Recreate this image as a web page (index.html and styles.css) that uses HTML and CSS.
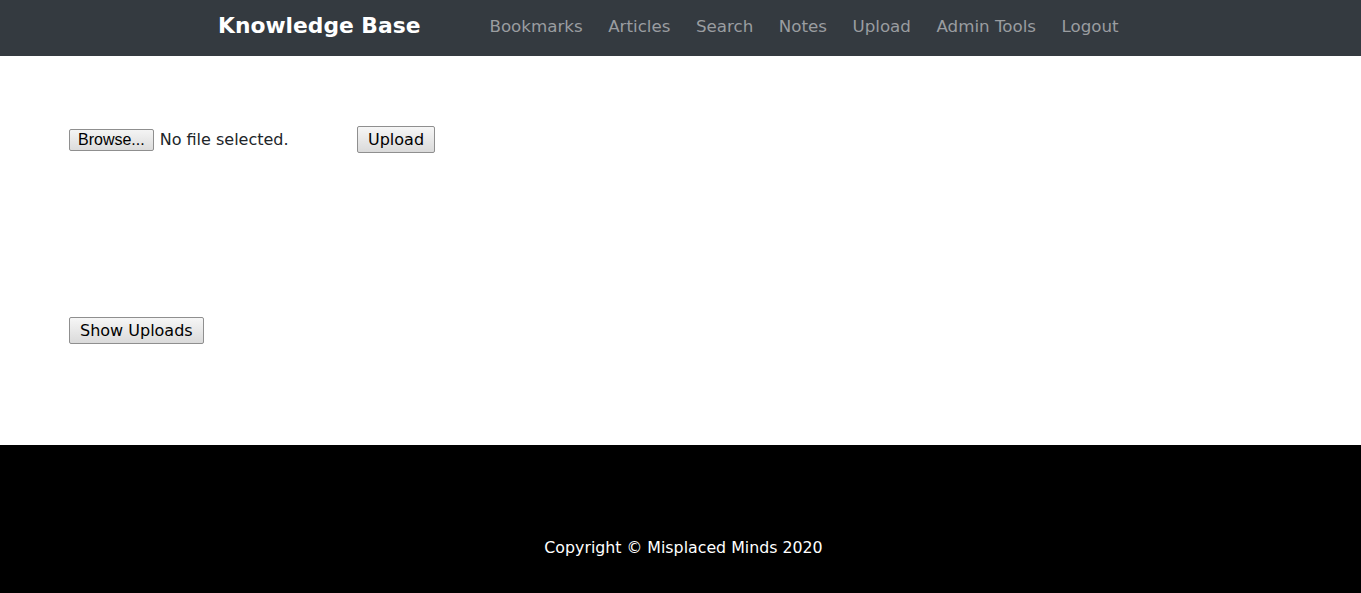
FILE: index.html
```html
<!DOCTYPE html>
<html>
<head>
<meta charset="utf-8">
<title>Knowledge Base</title>
<link rel="stylesheet" href="styles.css">
</head>
<body>
<nav class="navbar">
  <div class="nav-inner">
    <a class="brand" href="#">Knowledge Base</a>
    <ul class="nav-links">
      <li><a href="#">Bookmarks</a></li>
      <li><a href="#">Articles</a></li>
      <li><a href="#">Search</a></li>
      <li><a href="#">Notes</a></li>
      <li><a href="#">Upload</a></li>
      <li><a href="#">Admin Tools</a></li>
      <li><a href="#">Logout</a></li>
    </ul>
  </div>
</nav>
<main class="content">
  <form class="upload-form">
    <div class="file-input">
      <button type="button" class="browse">Browse...</button>
      <span class="file-status">No file selected.</span>
    </div>
    <button type="button" class="btn">Upload</button>
  </form>
  <div class="show-row">
    <button type="button" class="btn">Show Uploads</button>
  </div>
</main>
<footer class="footer">
  <p>Copyright © Misplaced Minds 2020</p>
</footer>
</body>
</html>
```
FILE: styles.css
```css
* { box-sizing: border-box; }
html, body { margin: 0; padding: 0; }
body {
  font-family: "DejaVu Sans", sans-serif;
  color: #212529;
  background: #fff;
  width: 1361px;
}
.navbar {
  background: #343a40;
  height: 56px;
  display: flex;
  align-items: center;
  padding-bottom: 5px;
}
.nav-inner {
  display: flex;
  align-items: center;
  padding-left: 218px;
}
.brand {
  color: #fff;
  font-weight: bold;
  font-size: 21.8px;
  text-decoration: none;
  margin-right: 69px;
}
.nav-links {
  list-style: none;
  display: flex;
  gap: 25.5px;
  margin: 0;
  padding: 0;
}
.nav-links a {
  color: #9a9da0;
  text-decoration: none;
  font-size: 16.7px;
}
.content {
  height: 389px;
  padding: 70px 0 0 69px;
}
.upload-form {
  display: flex;
  align-items: center;
  height: 27px;
}
.file-input {
  display: flex;
  align-items: center;
  width: 288px;
}
.browse {
  font-family: "Liberation Sans", Arial, sans-serif;
  font-size: 16px;
  height: 22px;
  padding: 0 8px;
  border: 1px solid #8f8f8f;
  border-radius: 2px;
  background: linear-gradient(#f4f4f4, #dcdcdc);
  color: #000;
  margin-right: 6px;
}
.file-status {
  font-size: 16px;
  color: #212529;
}
.btn {
  font-family: "DejaVu Sans", sans-serif;
  font-size: 16px;
  height: 27px;
  padding: 0 10px;
  border: 1px solid #8f8f8f;
  border-radius: 2px;
  background: linear-gradient(#f6f6f6, #dadada);
  color: #000;
}
.show-row {
  margin-top: 164px;
  display: flex;
}
.footer {
  background: #000;
  height: 148px;
  display: flex;
  align-items: center;
  justify-content: center;
  padding-top: 56px;
  padding-left: 6px;
}
.footer p {
  margin: 0;
  color: #fff;
  font-size: 15.8px;
}
```
